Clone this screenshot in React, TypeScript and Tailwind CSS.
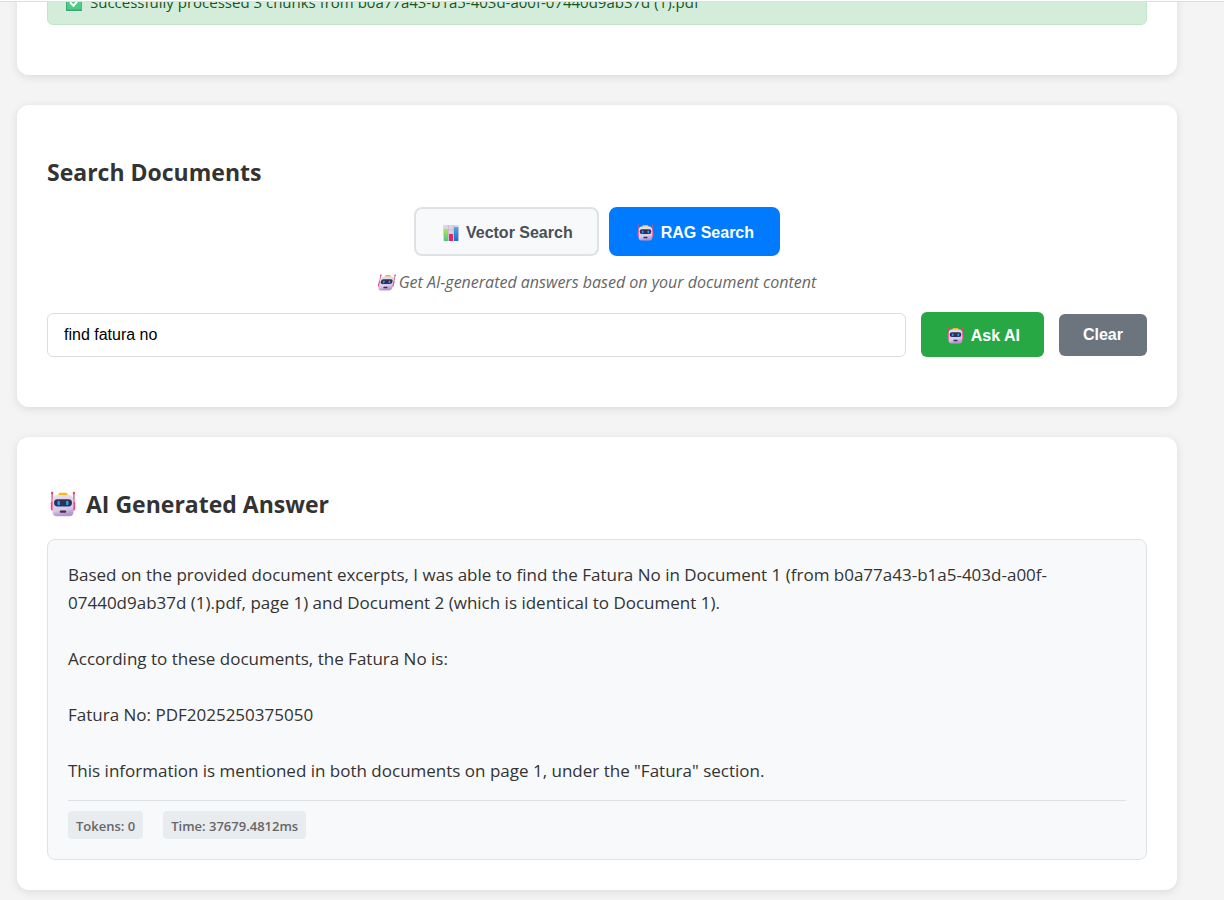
import { useState } from "react";
import type { ReactNode } from "react";

function RobotIcon({ className }: { className: string }) {
  return (
    <svg viewBox="0 0 32 32" className={className} aria-hidden="true">
      <defs>
        <linearGradient id="robot-face" x1="0" y1="0" x2="0.2" y2="1">
          <stop offset="0" stopColor="#e9e0ef" />
          <stop offset="0.75" stopColor="#d9cae6" />
          <stop offset="1" stopColor="#b595cf" />
        </linearGradient>
        <linearGradient id="robot-visor" x1="0" y1="0" x2="0" y2="1">
          <stop offset="0" stopColor="#3b2a52" />
          <stop offset="1" stopColor="#26355f" />
        </linearGradient>
      </defs>
      <rect x="1.800" y="2" width="1.600" height="13" fill="#c9527c" />
      <rect x="28.600" y="2" width="1.600" height="13" fill="#c9527c" />
      <circle cx="2.600" cy="2.400" r="1.500" fill="#fb3c6c" />
      <circle cx="29.400" cy="2.400" r="1.500" fill="#fb3c6c" />
      <rect x="1" y="13" width="5" height="11" rx="2" fill="#f4428a" />
      <rect x="26" y="13" width="5" height="11" rx="2" fill="#f4428a" />
      <path d="M10.500 6V4C10.500 2.800 11.300 2 12.500 2h7c1.200 0 2 .8 2 2v2z" fill="#fcb51c" />
      <path d="M9 4.800h14c3.600 0 5.800 2.600 5.800 6.200v15c0 3-1.800 5-5 5H8.200c-3.200 0-5-2-5-5V11C3.200 7.400 5.400 4.800 9 4.800z" fill="url(#robot-face)" />
      <rect x="5" y="10" width="22" height="9" rx="4.200" fill="url(#robot-visor)" />
      <rect x="9.200" y="12" width="3" height="5.500" rx="1.500" fill="#1ca5f5" />
      <rect x="19.800" y="12" width="3" height="5.500" rx="1.500" fill="#1ca5f5" />
      <rect x="12" y="24" width="8" height="2.800" rx="1.400" fill="#3e2b57" />
    </svg>
  );
}

function ChartIcon({ className }: { className: string }) {
  return (
    <svg viewBox="0 0 32 32" className={className} aria-hidden="true">
      <defs>
        <linearGradient id="bar-green" x1="0" y1="0" x2="0" y2="1">
          <stop offset="0" stopColor="#a6e85c" />
          <stop offset="1" stopColor="#52c477" />
        </linearGradient>
        <linearGradient id="bar-blue" x1="0" y1="0" x2="0" y2="1">
          <stop offset="0" stopColor="#49a9e8" />
          <stop offset="1" stopColor="#1e6fc0" />
        </linearGradient>
      </defs>
      <rect x="0" y="0" width="32" height="32" rx="3" fill="#ddd3e2" />
      <path d="M0 10h32M0 18h32M11 0v32M20.500 0v32" stroke="#c1b3ca" strokeWidth="1.200" />
      <rect x="2" y="8" width="8" height="24" rx="1" fill="url(#bar-green)" />
      <rect x="12" y="18" width="8" height="14" rx="1" fill="#e5226b" />
      <rect x="22" y="4" width="8.500" height="28" rx="1" fill="url(#bar-blue)" />
    </svg>
  );
}

function CheckIcon({ className }: { className: string }) {
  return (
    <svg viewBox="0 0 32 32" className={className} aria-hidden="true">
      <rect x="0" y="0" width="32" height="32" rx="1" fill="#38a874" />
      <rect x="2" y="1" width="29" height="28" rx="1" fill="#4fcb83" />
      <path d="M8 14.500l7 7 10-12" fill="none" stroke="#fff" strokeWidth="4" />
    </svg>
  );
}

function Card({ className = "", children }: { className?: string; children: ReactNode }) {
  return (
    <section className={`rounded-xl bg-white px-[30px] shadow-[0_2px_10px_rgba(0,0,0,0.1)] ${className}`}>
      {children}
    </section>
  );
}

function Pill({ children }: { children: ReactNode }) {
  return <span className="rounded bg-[#e9ecef] px-2 pt-[5px] pb-[3px] text-[13px] leading-5 font-semibold text-[#666]">{children}</span>;
}

const modes = [
  { id: "vector", label: "Vector Search", Icon: ChartIcon, iconSize: "size-4" },
  { id: "rag", label: "RAG Search", Icon: RobotIcon, iconSize: "size-[17px]" },
];

export default function App() {
  const [mode, setMode] = useState("rag");
  const [query, setQuery] = useState("find fatura no");

  return (
    <div className="min-h-screen overflow-hidden bg-[#f4f4f4] pb-[10px] font-['Open_Sans','Noto_Sans',sans-serif] text-[#333]">
      <div className="relative z-10 h-[2px] border-b border-[#dfdfdf] bg-white" />
      <main className="mr-[47px] ml-[17px] flex flex-col gap-[30px]">
        <Card className="-mt-[60px] pt-[38px] pb-[50px]">
          <p className="flex items-center rounded-md border border-[#c3e6cb] bg-[#d4edda] px-[15px] py-[11px] text-[15px] leading-[21px] text-[#155724]">
            <span className="flex w-[27px] pl-[3px]">
              <CheckIcon className="size-4" />
            </span>
            Successfully processed 3 chunks from b0a77a43-b1a5-403d-a00f-07440d9ab37d (1).pdf
          </p>
        </Card>

        <Card className="pt-[51px] pb-[50px]">
          <h2 className="text-[23px] leading-8 font-bold">Search Documents</h2>
          <div className="mt-[19px] flex justify-center gap-[10px]">
            {modes.map(({ id, label, Icon, iconSize }) => (
              <button
                key={id}
                type="button"
                aria-pressed={mode === id}
                onClick={() => setMode(id)}
                className={`flex items-center gap-1 rounded-lg border-2 px-6 pt-[13px] pb-[11px] font-['Liberation_Sans',sans-serif] text-[16px] leading-[21px] font-bold ${
                  mode === id ? "border-[#007bff] bg-[#007bff] text-white" : "border-[#dee2e6] bg-[#f8f9fa] text-[#495057]"
                }`}
              >
                <span className="flex w-[22px] justify-center">
                  <Icon className={iconSize} />
                </span>
                {label}
              </button>
            ))}
          </div>
          <p className="mt-4 flex items-center justify-center gap-1 text-[16px] leading-[21px] text-[#666] italic">
            <RobotIcon className="size-[17px] -skew-x-12" />
            Get AI-generated answers based on your document content
          </p>
          <form className="mt-[19px] flex items-center gap-[15px]" onSubmit={(e) => e.preventDefault()}>
            <input
              type="text"
              aria-label="Search query"
              value={query}
              onChange={(e) => setQuery(e.target.value)}
              className="h-11 min-w-0 flex-1 rounded-md border border-[#ddd] bg-white px-4 font-['Liberation_Sans',sans-serif] text-[16px] text-black outline-none"
            />
            <button
              type="submit"
              className="flex items-center gap-1 rounded-md bg-[#28a745] px-6 pt-[13px] pb-[11px] font-['Liberation_Sans',sans-serif] text-[16px] leading-[21px] font-bold text-white"
            >
              <span className="flex w-[22px] justify-center">
                <RobotIcon className="size-[17px]" />
              </span>
              Ask AI
            </button>
            <button
              type="button"
              onClick={() => setQuery("")}
              className="rounded-md bg-[#6c757d] px-6 py-3 font-['Liberation_Sans',sans-serif] text-[16px] leading-[18px] font-bold text-white"
            >
              Clear
            </button>
          </form>
        </Card>

        <Card className="pt-[51px] pb-[30px]">
          <h2 className="flex items-center gap-[7px] text-[23px] leading-8 font-bold">
            <span className="flex w-8 justify-center">
              <RobotIcon className="size-[26px]" />
            </span>
            AI Generated Answer
          </h2>
          <div className="mt-[19px] rounded-lg border border-[#dee2e6] bg-[#f8f9fa] px-5 pt-[21px] pb-5">
            <div className="flex flex-col gap-7 text-[17px] leading-7">
              <p>
                Based on the provided document excerpts, I was able to find the Fatura No in Document 1 (from b0a77a43-b1a5-403d-a00f-
                <br />
                07440d9ab37d (1).pdf, page 1) and Document 2 (which is identical to Document 1).
              </p>
              <p>According to these documents, the Fatura No is:</p>
              <p>Fatura No: PDF2025250375050</p>
              <p>This information is mentioned in both documents on page 1, under the "Fatura" section.</p>
            </div>
            <div className="mt-[15px] flex gap-5 border-t border-[#dee2e6] pt-[10px]">
              <Pill>Tokens: 0</Pill>
              <Pill>Time: 37679.4812ms</Pill>
            </div>
          </div>
        </Card>
      </main>
    </div>
  );
}
